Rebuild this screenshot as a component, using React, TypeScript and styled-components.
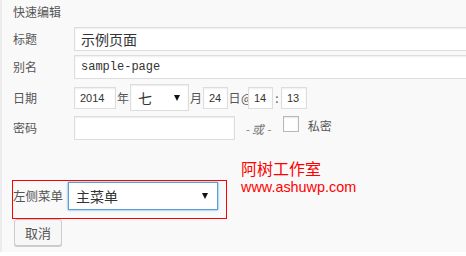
import styled, { createGlobalStyle } from 'styled-components';

const GlobalStyle = createGlobalStyle`
  html, body {
    margin: 0;
    padding: 0;
    background: #ffffff;
    overflow: hidden;
  }
  * {
    box-sizing: border-box;
  }
`;

const cjk = `"Noto Sans CJK SC", "Liberation Sans", sans-serif`;

const Panel = styled.div`
  position: relative;
  width: 466px;
  height: 252px;
  background: #f9f9f9;
  border-left: 2px solid #ececec;
  padding-left: 11px;
  overflow: hidden;
  font-family: ${cjk};
  font-size: 12px;
  color: #555;
`;

const Heading = styled.div`
  height: 27px;
  line-height: 24px;
  color: #555;
`;

const Field = styled.div<{ $h: number; $top?: number }>`
  display: flex;
  align-items: center;
  height: ${(p) => p.$h}px;
  margin-top: ${(p) => p.$top ?? 0}px;
`;

const Label = styled.span<{ $w?: number }>`
  flex: none;
  width: ${(p) => p.$w ?? 61}px;
  line-height: 16px;
  color: #555;
`;

const TextInput = styled.input<{ $w: number; $h?: number; $mono?: boolean; $size?: number }>`
  flex: none;
  width: ${(p) => p.$w}px;
  height: ${(p) => p.$h ?? 24}px;
  margin: 0;
  padding: 0 6px;
  border: 1px solid #dddddd;
  background: #fff;
  box-shadow: inset 0 1px 2px rgba(0, 0, 0, 0.07);
  outline: none;
  color: #333;
  font-family: ${(p) => (p.$mono ? `"Liberation Mono", monospace` : cjk)};
  font-size: ${(p) => p.$size ?? 14}px;
`;

const SmallInput = styled.input<{ $w: number }>`
  flex: none;
  width: ${(p) => p.$w}px;
  height: 22px;
  margin: 0;
  padding: 0 5px;
  border: 1px solid #dddddd;
  background: #fff;
  box-shadow: inset 0 1px 2px rgba(0, 0, 0, 0.07);
  outline: none;
  color: #333;
  font-family: "Liberation Sans", sans-serif;
  font-size: 11px;
`;

const Unit = styled.span<{ $w?: number }>`
  flex: none;
  width: ${(p) => (p.$w ? `${p.$w}px` : 'auto')};
  color: #555;
  line-height: 16px;
  text-align: center;
`;

const FakeSelect = styled.div<{ $w: number; $h: number; $focus?: boolean; $pad?: number }>`
  flex: none;
  display: flex;
  align-items: center;
  justify-content: space-between;
  width: ${(p) => p.$w}px;
  height: ${(p) => p.$h}px;
  padding: 0 ${(p) => p.$pad ?? 9}px 0 7px;
  background: #fff;
  border: 1px solid ${(p) => (p.$focus ? '#5b9dd9' : '#dddddd')};
  box-shadow: ${(p) => (p.$focus ? '0 0 2px rgba(30, 140, 190, 0.8)' : 'inset 0 1px 2px rgba(0, 0, 0, 0.07)')};
  color: #333;
  font-size: 14px;
`;

const Arrow = styled.span`
  width: 0;
  height: 0;
  border-left: 3.5px solid transparent;
  border-right: 3.5px solid transparent;
  border-top: 6px solid #111;
`;

const OrText = styled.em`
  margin: 0 12px 0 10px;
  color: #777;
  font-size: 12px;
`;

const CheckBox = styled.span`
  flex: none;
  width: 16px;
  height: 16px;
  margin-top: -9px;
  border: 1px solid #b4b9be;
  background: #fff;
  box-shadow: inset 0 1px 2px rgba(0, 0, 0, 0.1);
`;

const CheckLabel = styled.span`
  margin-left: 9px;
  margin-top: -6px;
  color: #555;
`;

const MenuBox = styled.div`
  display: flex;
  align-items: flex-start;
  width: 215px;
  height: 39px;
  margin-top: 40px;
  margin-left: -1px;
  padding: 1px 8px 0 0;
  border: 1px solid #ff0000;
`;

const MenuLabel = styled.span`
  flex: none;
  width: 55px;
  margin-top: 6px;
  line-height: 16px;
  font-size: 12.5px;
  color: #555;
`;

const Button = styled.button`
  display: block;
  width: 48px;
  height: 27px;
  margin: 0 0 0 1px;
  padding: 0;
  border: 1px solid #cccccc;
  border-radius: 3px;
  background: #f7f7f7;
  box-shadow: 0 1px 0 #cccccc;
  color: #555;
  font-family: ${cjk};
  font-size: 13px;
`;

const Annotation = styled.div`
  position: absolute;
  left: 239px;
  top: 157px;
  color: #ff0000;
`;

const AnnoTitle = styled.div`
  font-family: ${cjk};
  font-size: 16px;
  line-height: 22px;
`;

const AnnoUrl = styled.div`
  font-family: "Liberation Sans", sans-serif;
  font-size: 14.4px;
  line-height: 16px;
`;

export default function App() {
  return (
    <>
      <GlobalStyle />
      <Panel>
        <Heading>快速编辑</Heading>
        <Field $h={24}>
          <Label>标题</Label>
          <TextInput $w={420} readOnly value="示例页面" />
        </Field>
        <Field $h={24} $top={4}>
          <Label>别名</Label>
          <TextInput $w={420} $mono $size={12} readOnly value="sample-page" />
        </Field>
        <Field $h={27} $top={5}>
          <Label>日期</Label>
          <SmallInput $w={42} readOnly value="2014" />
          <Unit $w={14}>年</Unit>
          <FakeSelect $w={59} $h={27} $pad={8}>
            <span>七</span>
            <Arrow />
          </FakeSelect>
          <Unit $w={14}>月</Unit>
          <SmallInput $w={25} readOnly value="24" />
          <Unit $w={13}>日</Unit>
          <Unit $w={7}>@</Unit>
          <SmallInput $w={25} readOnly value="14" />
          <Unit $w={8}>:</Unit>
          <SmallInput $w={26} readOnly value="13" />
        </Field>
        <Field $h={24} $top={5}>
          <Label>密码</Label>
          <TextInput $w={161} readOnly value="" />
          <OrText>- 或 -</OrText>
          <CheckBox />
          <CheckLabel>私密</CheckLabel>
        </Field>
        <MenuBox>
          <MenuLabel>左侧菜单</MenuLabel>
          <FakeSelect $w={150} $h={28} $focus>
            <span>主菜单</span>
            <Arrow />
          </FakeSelect>
        </MenuBox>
        <Button>取消</Button>
        <Annotation>
          <AnnoTitle>阿树工作室</AnnoTitle>
          <AnnoUrl>www.ashuwp.com</AnnoUrl>
        </Annotation>
      </Panel>
    </>
  );
}
